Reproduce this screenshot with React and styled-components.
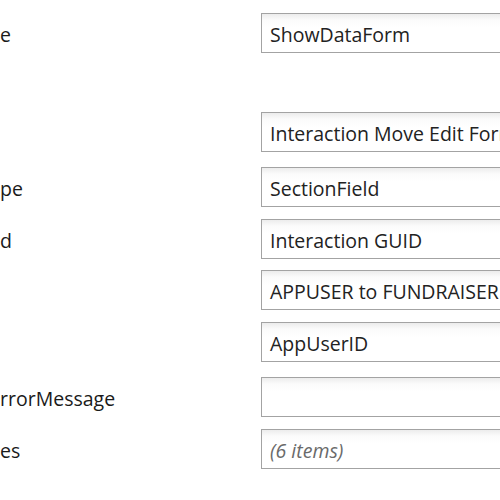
import React from "react";
import styled, { createGlobalStyle } from "styled-components";

const GlobalStyle = createGlobalStyle`
  html, body {
    margin: 0;
    padding: 0;
    background: #fff;
    overflow: hidden;
  }
  body {
    font-family: "Open Sans", "Noto Sans", "DejaVu Sans", sans-serif;
    color: #222;
  }
`;

// property grid rows, label column is scrolled off to the left
const rows = [
  { label: "e", value: "ShowDataForm", spacing: 61 },
  { label: "", value: "Interaction Move Edit Form" },
  { label: "pe", value: "SectionField" },
  { label: "d", value: "Interaction GUID" },
  { label: "", value: "APPUSER to FUNDRAISER" },
  { label: "", value: "AppUserID" },
  { label: "rrorMessage", value: "" },
  { label: "es", value: "(6 items)", muted: true },
];

const App = () => {
  return (
    <>
      <GlobalStyle />
      <PropertyGrid>
        {rows.map((row, i) => (
          <Row key={i} $spacing={row.spacing}>
            <Label>{row.label}</Label>
            <ValueBox $muted={row.muted}>{row.value}</ValueBox>
          </Row>
        ))}
      </PropertyGrid>
    </>
  );
};

const PropertyGrid = styled.div`
  display: flex;
  flex-direction: column;
  padding-top: 11px;
  width: 600px;
`;

const Row = styled.div`
  display: grid;
  grid-template-columns: 261px 320px;
  align-items: center;
  height: 40px;
  margin-bottom: ${(p) => p.$spacing ?? 12.5}px;
`;

const Label = styled.div`
  font-size: 19.5px;
  line-height: 40px;
  padding-top: 4px;
  white-space: nowrap;
  color: #1a1a1a;
`;

const ValueBox = styled.div`
  box-sizing: border-box;
  height: 40px;
  border: 1px solid #a3a3a3;
  background: linear-gradient(#ececec 0px, #fbfbfb 6px, #ffffff 14px);
  padding: 4px 0 0 8px;
  font-size: 19.5px;
  line-height: 34px;
  white-space: nowrap;
  overflow: hidden;
  color: ${(p) => (p.$muted ? "#6a6a6a" : "#222")};
  font-style: ${(p) => (p.$muted ? "italic" : "normal")};
`;

export default App;
